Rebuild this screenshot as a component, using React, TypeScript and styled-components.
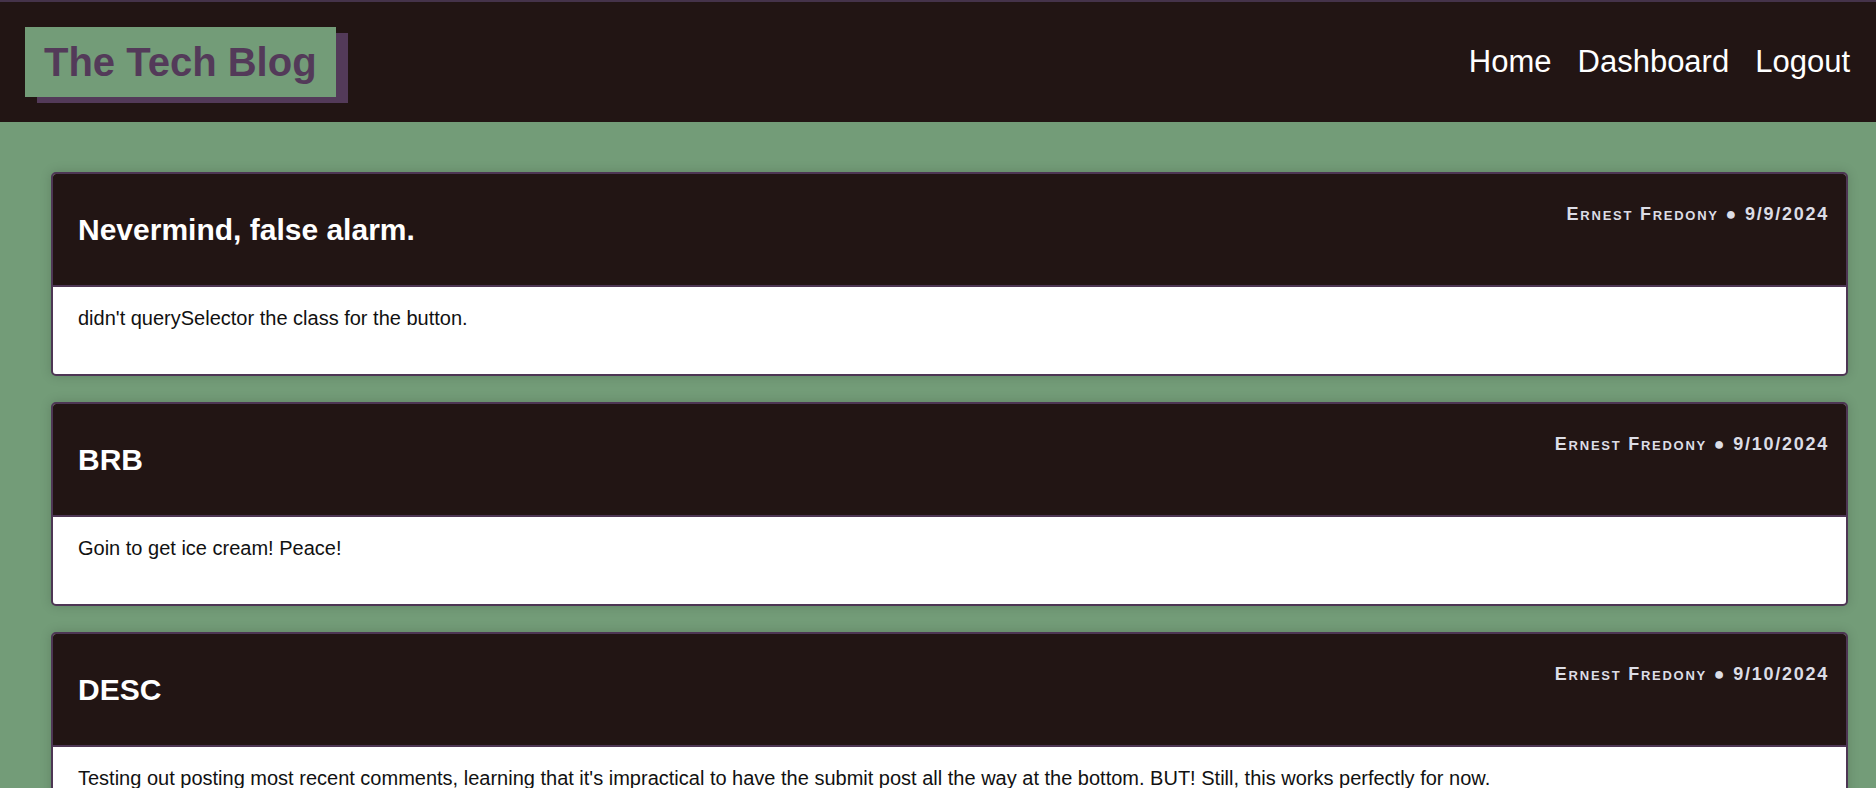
import React from "react";
import styled, { createGlobalStyle } from "styled-components";

const GlobalStyle = createGlobalStyle`
  html, body {
    margin: 0;
    padding: 0;
    background: #739c78;
    font-family: "Liberation Sans", Arial, sans-serif;
  }
  * { box-sizing: border-box; }
`;

const Header = styled.header`
  display: flex;
  align-items: center;
  justify-content: space-between;
  height: 122px;
  padding: 0 26px 0 25px;
  background: #221514;
  border-top: 2px solid #45334a;
`;

const Logo = styled.a`
  display: block;
  padding: 12px 19px 12px 19px;
  background: #739c78;
  color: #533a59;
  font-size: 40px;
  font-weight: 700;
  line-height: 46px;
  text-decoration: none;
  box-shadow: 12px 6px 0 #533a59;
`;

const Nav = styled.nav`
  display: flex;
  gap: 26px;
`;

const NavLink = styled.a`
  color: #ffffff;
  font-size: 31px;
  text-decoration: none;
`;

const Main = styled.main`
  display: flex;
  flex-direction: column;
  gap: 26px;
  padding: 50px 28px 40px 51px;
`;

const Card = styled.article`
  border: 2px solid #4d3654;
  border-radius: 5px;
  overflow: hidden;
  background: #ffffff;
  box-shadow: 0 0 12px rgba(0, 0, 0, 0.16);
`;

const CardHeader = styled.div`
  display: flex;
  justify-content: space-between;
  align-items: center;
  height: 113px;
  padding: 0 17px 0 25px;
  background: #221514;
  border-bottom: 2px solid #4d3654;
`;

const Title = styled.h2`
  margin: 0;
  color: #ffffff;
  font-size: 30px;
  font-weight: 700;
`;

const Meta = styled.div`
  align-self: flex-start;
  margin-top: 30px;
  color: #dcdde6;
  font-size: 18px;
  font-weight: 700;
  font-variant: small-caps;
  letter-spacing: 1.75px;
`;

const CardBody = styled.div`
  padding: 20px 25px 44px;
  color: #111111;
  font-size: 20px;
`;

const posts = [
  {
    title: "Nevermind, false alarm.",
    author: "Ernest Fredony",
    date: "9/9/2024",
    body: "didn't querySelector the class for the button.",
  },
  {
    title: "BRB",
    author: "Ernest Fredony",
    date: "9/10/2024",
    body: "Goin to get ice cream! Peace!",
  },
  {
    title: "DESC",
    author: "Ernest Fredony",
    date: "9/10/2024",
    body: "Testing out posting most recent comments, learning that it's impractical to have the submit post all the way at the bottom. BUT! Still, this works perfectly for now.",
  },
];

export default function App() {
  return (
    <>
      <GlobalStyle />
      <Header>
        <Logo href="#">The Tech Blog</Logo>
        <Nav>
          <NavLink href="#">Home</NavLink>
          <NavLink href="#">Dashboard</NavLink>
          <NavLink href="#">Logout</NavLink>
        </Nav>
      </Header>
      <Main>
        {posts.map((p, i) => (
          <Card key={i}>
            <CardHeader>
              <Title>{p.title}</Title>
              <Meta>
                {p.author} ● {p.date}
              </Meta>
            </CardHeader>
            <CardBody>{p.body}</CardBody>
          </Card>
        ))}
      </Main>
    </>
  );
}
